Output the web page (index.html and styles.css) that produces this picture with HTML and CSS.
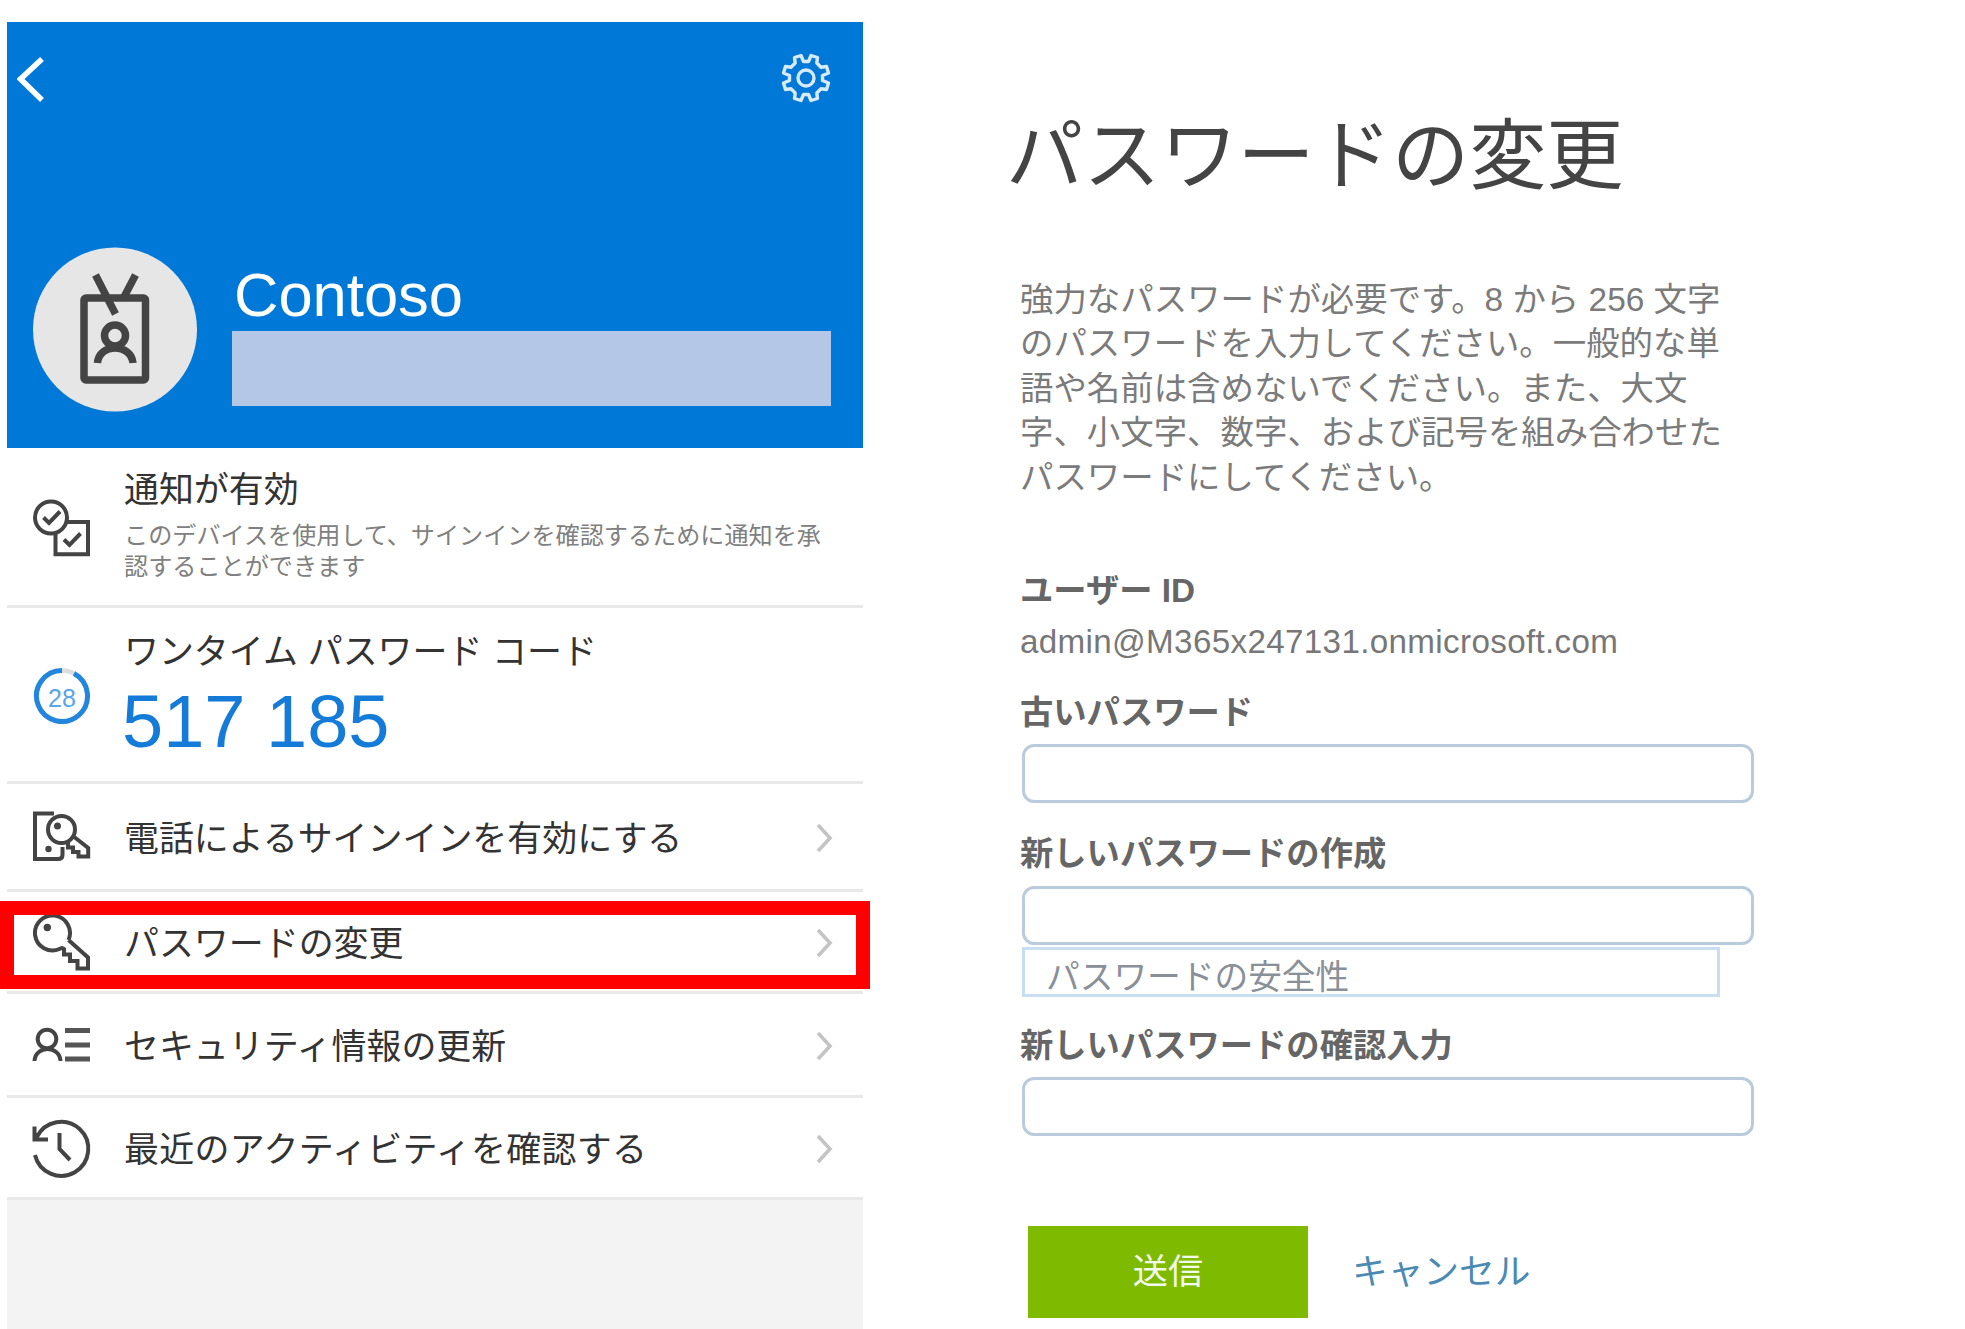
FILE: index.html
```html
<!DOCTYPE html>
<html lang="ja">
<head>
<meta charset="utf-8">
<title>パスワードの変更</title>
<link rel="stylesheet" href="styles.css">
</head>
<body>
<main class="page">
  <section class="phone">
    <header class="hero">
      <div class="toolbar">
        <svg class="back" viewBox="17 56 28 48"><path d="M42 59 20.500 79 42 100"/></svg>
        <svg class="gear" viewBox="-25 -25 50 50"><circle r="8"/><path d="M-2.500 -16.500 L-5 -22.500 L-11.500 -20.500 L-10.800 -15 L-15 -10.800 L-20.500 -11.500 L-22.500 -5 L-16.500 -2.500 L-16.500 2.500 L-22.500 5 L-20.500 11.500 L-15 10.800 L-10.800 15 L-11.500 20.500 L-5 22.500 L-2.500 16.500 L2.500 16.500 L5 22.500 L11.500 20.500 L10.800 15 L15 10.800 L20.500 11.500 L22.500 5 L16.500 2.500 L16.500 -2.500 L22.500 -5 L20.500 -11.500 L15 -10.800 L10.800 -15 L11.500 -20.500 L5 -22.500 L2.500 -16.500Z"/></svg>
      </div>
      <div class="account">
        <svg class="avatar" viewBox="33 247 164 165"><circle class="disc" cx="115" cy="329.5" r="82"/><rect x="84" y="298" width="61.5" height="82" rx="2"/><path d="M95.5 275 115.5 314M135.5 275 124 297M97.5 363C99 343 131 343 133 363"/><circle cx="115" cy="335.5" r="10.5"/></svg>
        <div class="identity"><h1 class="name">Contoso</h1><div class="masked"></div></div>
      </div>
    </header>
    <div class="row notice">
      <svg class="icon" viewBox="32 487 60 80"><path d="M55.500 522H88v32.300H55.500Z"/><circle class="cover" cx="51" cy="517.500" r="16"/><path d="m43.500 517.500 5.500 5.500 11-11.500M64 539.500l5.500 5.500 11-11.500"/></svg>
      <div class="copy"><h2 class="label">通知が有効</h2><p class="hint">このデバイスを使用して、サインインを確認するために通知を承<br>認することができます</p></div>
    </div>
    <div class="row otp">
      <svg class="icon" viewBox="32 655.500 60 80"><circle class="track" cx="62" cy="695.500" r="25.500"/><path class="progress" d="M74 673A25.500 25.500 0 1 1 62 670"/><text class="seconds" x="62" y="706.500">28</text></svg>
      <div class="copy"><h2 class="label">ワンタイム パスワード コード</h2><p class="code">517 185</p></div>
    </div>
    <div class="row link signin">
      <svg class="icon" viewBox="32 798 60 80"><path d="M54 814.500H35V860H58Q62.500 860 62.500 856V848"/><circle class="cover" cx="61.500" cy="830.500" r="13.500"/><path d="M73 837 88.200 849V857.500H78.500V853H73V848.500H68V843"/><circle class="dot" cx="57.500" cy="827" r="3.500"/><circle class="dot" cx="48.500" cy="850" r="3.200"/></svg>
      <span class="label">電話によるサインインを有効にする</span>
      <svg class="chevron" viewBox="0 0 18 30"><path d="m2 2 12 13L2 28"/></svg>
    </div>
    <div class="row link">
      <svg class="icon" viewBox="32 903 60 80"><path d="M68.500 941 88 958.500V969.500H77.500V962H70V955.500H64V950Q62 948 59.500 950A17.500 17.500 0 1 1 68.500 941"/><circle class="dot" cx="47.300" cy="928.500" r="3.700"/></svg>
      <span class="label">パスワードの変更</span>
      <svg class="chevron" viewBox="0 0 18 30"><path d="m2 2 12 13L2 28"/></svg>
    </div>
    <div class="row link security">
      <svg class="icon" viewBox="32 1006 60 80"><circle cx="47" cy="1040" r="9.300"/><path d="M34.500 1062C35.500 1046 59.500 1046 60.500 1062"/><path class="bars" d="M65 1031.500h25M65 1046h25M65 1060h25"/></svg>
      <span class="label">セキュリティ情報の更新</span>
      <svg class="chevron" viewBox="0 0 18 30"><path d="m2 2 12 13L2 28"/></svg>
    </div>
    <div class="row link activity">
      <svg class="icon" viewBox="32 1109 60 80"><path d="M35 1156A27 27 0 1 0 37 1138M34.500 1127.500V1140.500H48M34.500 1140.500l4.500-6M59.500 1134V1150L70 1161"/></svg>
      <span class="label">最近のアクティビティを確認する</span>
      <svg class="chevron" viewBox="0 0 18 30"><path d="m2 2 12 13L2 28"/></svg>
    </div>
    <div class="highlight"></div>
  </section>

  <form class="form">
    <h1 class="title">パスワードの変更</h1>
    <p class="intro">強力なパスワードが必要です。8 から 256 文字<br>のパスワードを入力してください。一般的な単<br>語や名前は含めないでください。また、大文<br>字、小文字、数字、および記号を組み合わせた<br>パスワードにしてください。</p>
    <div class="field-label">ユーザー ID</div>
    <div class="user">admin@M365x247131.onmicrosoft.com</div>
    <label class="field-label" for="old">古いパスワード</label>
    <input class="box" id="old" type="password">
    <label class="field-label create" for="new">新しいパスワードの作成</label>
    <input class="box" id="new" type="password">
    <div class="strength">パスワードの安全性</div>
    <label class="field-label confirm" for="again">新しいパスワードの確認入力</label>
    <input class="box" id="again" type="password">
    <div class="actions"><button class="submit" type="button">送信</button><a class="cancel">キャンセル</a></div>
  </form>
</main>
</body>
</html>
```
FILE: styles.css
```css
* { box-sizing: border-box; }
body {
  margin: 0;
  background: #fff;
  font-family: "Liberation Sans", "Noto Sans CJK JP", sans-serif;
  color: #333;
}
h1, h2, p { margin: 0; font-weight: 400; }
svg { display: block; fill: none; flex: none; }
.page {
  display: grid;
  grid-template-columns: 856px 740px;
  column-gap: 159px;
  height: 1329px;
  padding-left: 7px;
  overflow: hidden;
  white-space: nowrap;
}

/* Account panel */
.phone {
  position: relative;
  display: flex;
  flex-direction: column;
  margin-top: 22px;
  background: #f3f3f3;
}
.hero { height: 426px; background: #0078d7; padding-top: 31px; }
.toolbar { display: flex; justify-content: space-between; padding: 0 32px 0 10px; height: 50px; }
.back { width: 28px; height: 48px; margin-top: 3px; stroke: #fff; stroke-width: 5.500; }
.gear { width: 50px; height: 50px; stroke: #d8e9f9; stroke-width: 3.400; stroke-linejoin: round; }
.account { display: flex; gap: 35px; padding: 144px 0 0 26px; }
.avatar { width: 164px; height: 165px; stroke: #444; stroke-width: 7.500; }
.avatar .disc { fill: #e6e6e6; stroke: none; }
.name { height: 84px; padding: 13px 0 0 2px; line-height: 70px; font-size: 61.500px; color: #fff; }
.masked { width: 599px; height: 75px; background: #b4c7e7; }

.row {
  display: flex;
  align-items: center;
  height: 102px;
  padding: 0 29px 0 25px;
  border-bottom: 3px solid #e9e9e9;
  background: #fff;
}
.notice { height: 160px; }
.otp { height: 176px; }
.signin { height: 108px; }
.security { height: 104px; }
.link { padding-top: 3px; }
.icon { width: 60px; height: 80px; margin-right: 32px; stroke: #444; stroke-width: 4; }
.link .icon { margin-top: -3px; }
.icon .cover { fill: #fff; }
.icon .dot { fill: #444; stroke: none; }
.icon .bars { stroke: #555; stroke-width: 5; }
.icon .track { stroke: #ddd; stroke-width: 4.500; }
.icon .progress { stroke: #2386dd; stroke-width: 5; }
.seconds { fill: #5aa5e8; stroke: none; font-size: 25px; text-anchor: middle; }
.otp .icon { margin-top: 3px; }
.label { flex: 1; font-size: 34.950px; line-height: 50px; }
.link .label { padding-top: 1px; }
.activity .label { letter-spacing: .35px; }
.copy { flex: 1; }
.notice .copy { margin-top: -6px; }
.hint { font-size: 24.130px; line-height: 30.500px; color: #808080; padding-top: 6px; }
.code { font-size: 74px; line-height: 80px; color: #147bd8; margin-left: -2px; padding-top: 5px; }
.otp .copy { margin-top: -1px; }
.chevron { width: 18px; height: 30px; stroke: #c4c4c4; stroke-width: 3.600; }
.highlight {
  position: absolute;
  left: -7px;
  top: 879px;
  width: 870px;
  height: 88px;
  border: 14px solid #f00;
}

/* Password form */
.form { display: flex; flex-direction: column; }
.title { height: 80px; margin: 116px 0 0 -16px; font-size: 77.200px; line-height: 80px; color: #444; }
.intro { margin-top: 82px; font-size: 33.430px; line-height: 44.400px; color: #7b7b7b; margin-left: -2px; }
.field-label { height: 44px; margin: 69px 0 0 -2px; font-size: 33.300px; line-height: 44px; font-weight: 700; color: #666; }
.user { height: 44px; margin: 7px 0 0 -2px; font-size: 33.200px; line-height: 44px; letter-spacing: .34px; color: #777; }
.user + .field-label { margin-top: 27px; }
.box {
  width: 732px;
  height: 59px;
  flex: none;
  border: 3px solid #b9cbdc;
  border-radius: 12px;
  outline: none;
  background: #fff;
  margin: 9px 0 0;
}
.field-label.create { margin-top: 29px; }
.create + .box { margin-top: 10px; }
.strength { width: 698px; height: 50px; margin-top: 2px; padding-left: 21px; border: 3px solid #c7dff0; font-size: 33.700px; line-height: 54px; color: #8a9097; }
.field-label.confirm { margin-top: 27px; }
.actions { display: flex; align-items: center; height: 92px; margin: 90px 0 0 6px; }
.submit { width: 280px; height: 92px; border: 0; padding: 0; background: #7dba00; color: #f4faea; font: 35.200px/92px "Liberation Sans", "Noto Sans CJK JP", sans-serif; }
.cancel { margin-left: 44px; font-size: 35.700px; line-height: 50px; color: #4b8ab3; }
```
